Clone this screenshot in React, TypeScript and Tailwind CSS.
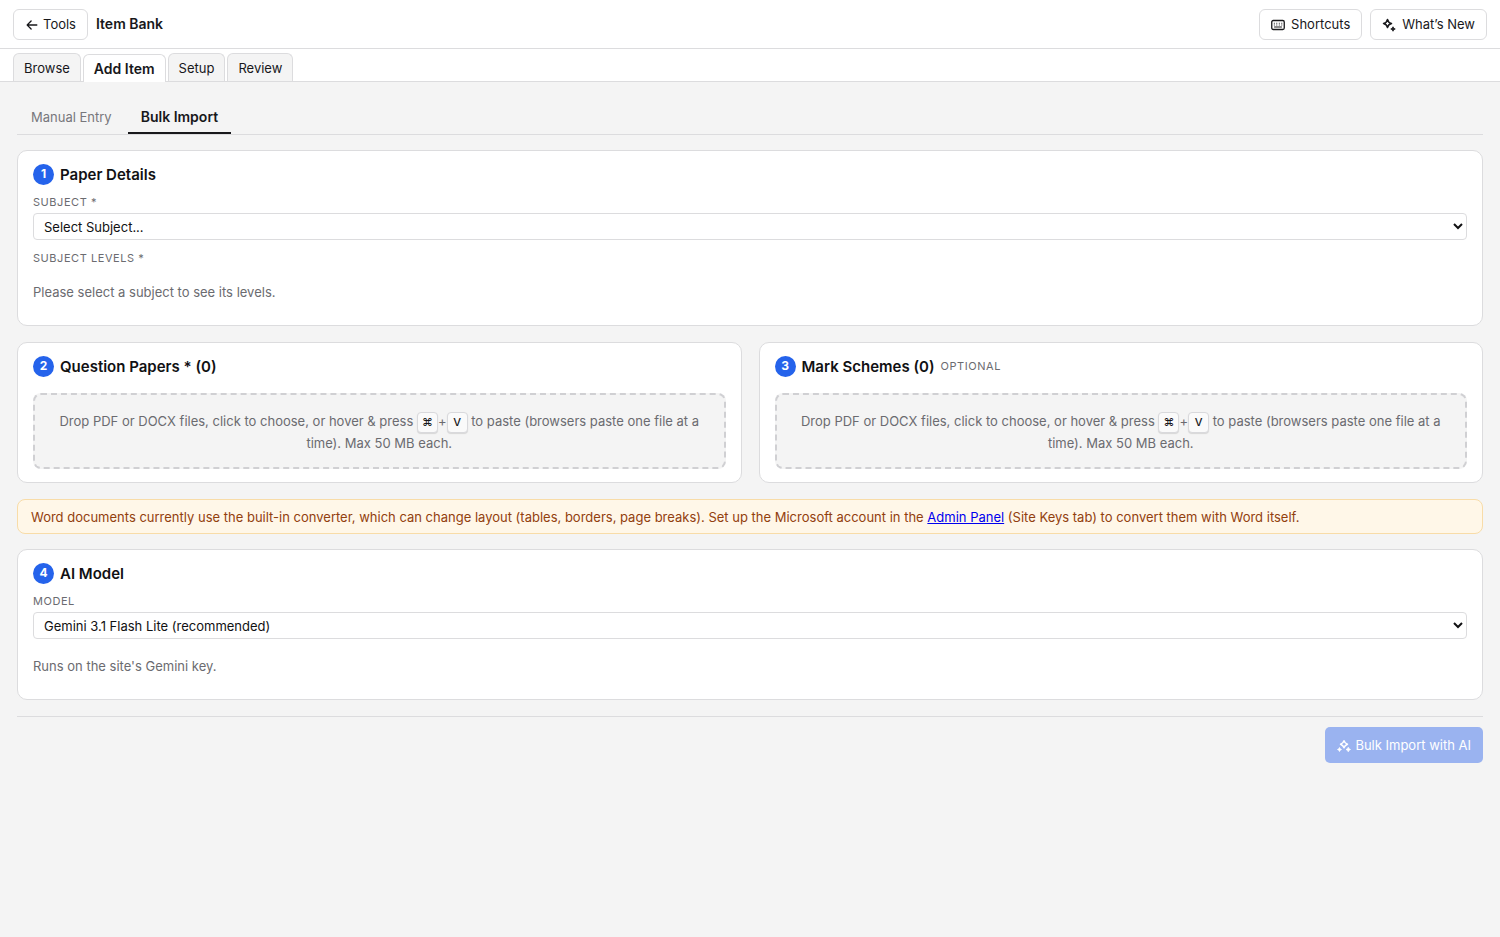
import React, { useState } from 'react';
import { PiArrowLeftBold } from 'react-icons/pi';

interface TabItem {
  id: string;
  label: string;
}

const MAIN_TABS: TabItem[] = [
  { id: 'browse', label: 'Browse' },
  { id: 'add', label: 'Add Item' },
  { id: 'setup', label: 'Setup' },
  { id: 'review', label: 'Review' },
];

const SUB_TABS: TabItem[] = [
  { id: 'manual', label: 'Manual Entry' },
  { id: 'bulk', label: 'Bulk Import' },
];

const FIELD_LABEL = 'block text-[11px] leading-4 tracking-wider uppercase text-[#6b6b70]';
const HINT = 'text-[13px] leading-[22px] text-[#6b6b70]';
const CARD = 'rounded-[10px] border border-[#dcdcde] bg-white px-[15px] pt-[10px]';
const HEADER_BUTTON =
  'flex h-[31px] items-center rounded-md border border-[#dcdcde] bg-white px-[11px] pt-[2px] text-[13px] text-[#18181b]';

const KeyboardIcon: React.FC = () => (
  <svg viewBox="0 0 28 28" className="size-[14px]" fill="none" stroke="currentColor" strokeWidth="2.6" strokeLinecap="round" aria-hidden="true">
    <rect x="1.5" y="5" width="25" height="18" rx="3" />
    <path d="M6.5 10.5h.2M11.5 10.5h.2M16.5 10.5h.2M21.5 10.5h.2M6.5 14h.2M11.5 14h.2M16.5 14h.2M21.5 14h.2" strokeWidth="2" />
    <path d="M7 18h14" strokeWidth="2" />
  </svg>
);

const SparkleIcon: React.FC = () => (
  <svg viewBox="0 0 28 28" className="size-[14px]" fill="none" stroke="currentColor" strokeLinejoin="round" aria-hidden="true">
    <path d="M11 3 Q12.4 9.6 19 11 Q12.4 12.4 11 19 Q9.6 12.4 3 11 Q9.6 9.6 11 3 Z" strokeWidth="3" />
    <path d="M22 17.5 L23.6 20.4 L26.5 22 L23.6 23.6 L22 26.5 L20.4 23.6 L17.5 22 L20.4 20.4 Z" fill="currentColor" strokeWidth="1.5" />
  </svg>
);

const SparklesIcon: React.FC = () => (
  <svg viewBox="0 0 28 28" className="size-[14px]" fill="none" stroke="currentColor" strokeLinejoin="round" aria-hidden="true">
    <path d="M14 3.5 Q15.8 8.7 21 10.5 Q15.8 12.3 14 17.5 Q12.2 12.3 7 10.5 Q12.2 8.7 14 3.5 Z" strokeWidth="3" />
    <path d="M5 17 L6.3 19.7 L9 21 L6.3 22.3 L5 25 L3.7 22.3 L1 21 L3.7 19.7 Z" fill="currentColor" strokeWidth="1.5" />
    <path d="M22.5 16.5 L24 19.5 L27 21 L24 22.5 L22.5 25.5 L21 22.5 L18 21 L21 19.5 Z" fill="currentColor" strokeWidth="1.5" />
  </svg>
);

const StepTitle: React.FC<{ step: number; title: string; note?: string }> = ({ step, title, note }) => (
  <div className="flex h-[26px] items-center">
    <span className="flex size-[21px] shrink-0 items-center justify-center rounded-full bg-[#2563eb] text-xs font-bold text-white">
      {step}
    </span>
    <h2 className="ml-[6px] pt-[2px] text-[15px] leading-[26px] font-semibold text-[#111113]">{title}</h2>
    {note && <span className="ml-[6px] text-[11px] leading-4 tracking-wider text-[#6b6b70] uppercase">{note}</span>}
  </div>
);

const Key: React.FC<{ children: React.ReactNode }> = ({ children }) => (
  <kbd className="-my-1 inline-flex size-[21px] items-center justify-center rounded border border-[#d9d9dc] bg-[#fafafa] align-middle font-['Inter',sans-serif] text-[11px] leading-4 font-medium text-[#18181b] shadow-[0_1px_1px_rgba(0,0,0,0.12)]">
    {children}
  </kbd>
);

const DropCard: React.FC<{ step: number; title: string; note?: string }> = ({ step, title, note }) => (
  <section className={`${CARD} pb-[13px]`}>
    <StepTitle step={step} title={title} note={note} />
    <button
      type="button"
      className="mt-[14px] block w-full rounded-lg border-2 border-dashed border-[#d0d0d3] bg-[#f4f4f4] px-4 pt-[15px] pb-[13px] text-center text-[13px] leading-[22px] text-[#6b6b70]"
    >
      Drop PDF or DOCX files, click to choose, or hover &amp; press <Key>⌘</Key>+<Key>V</Key> to paste (browsers paste
      one file at a time). Max 50 MB each.
    </button>
  </section>
);

const SelectField: React.FC<{ id: string; label: string; options: string[] }> = ({ id, label, options }) => (
  <div className="mt-[7px]">
    <label htmlFor={id} className={FIELD_LABEL}>{label}</label>
    <select
      id={id}
      className="mt-[3px] block h-[27px] w-full rounded border border-[#dcdcde] bg-white px-[6px] text-[13px] text-[#111113]"
    >
      {options.map((option) => (
        <option key={option}>{option}</option>
      ))}
    </select>
  </div>
);

const App: React.FC = () => {
  const [mainTab, setMainTab] = useState('add');
  const [subTab, setSubTab] = useState('bulk');

  return (
    <div className="min-h-screen bg-[#f4f4f4] font-['Inter',sans-serif] text-[13px] text-[#18181b]">
      <header className="flex h-[49px] items-center gap-2 border-b border-[#dcdcde] bg-white px-[13px]">
        <button type="button" className={`${HEADER_BUTTON} gap-1`}>
          <PiArrowLeftBold className="size-[14px]" />
          Tools
        </button>
        <h1 className="text-sm font-semibold">Item Bank</h1>
        <div className="ml-auto flex gap-2">
          <button type="button" className={`${HEADER_BUTTON} gap-[6px]`}>
            <KeyboardIcon />
            Shortcuts
          </button>
          <button type="button" className={`${HEADER_BUTTON} gap-[6px]`}>
            <SparkleIcon />
            What’s New
          </button>
        </div>
      </header>

      <nav className="flex h-[33px] items-end gap-[2px] border-b border-[#dcdcde] bg-white px-[13px]">
        {MAIN_TABS.map((tab) => (
          <button
            key={tab.id}
            type="button"
            onClick={() => setMainTab(tab.id)}
            className={
              tab.id === mainTab
                ? '-mb-px h-7 rounded-t-md border border-b-0 border-[#dcdcde] bg-white px-[10px] text-sm font-semibold'
                : 'h-7 rounded-t-md border border-b-0 border-[#dcdcde] bg-[#f4f4f4] px-[10px] pt-[2px]'
            }
          >
            {tab.label}
          </button>
        ))}
      </nav>

      <main className="px-[17px] pt-[18px]">
        <div className="flex h-[35px] border-b border-[#dcdcde]">
          {SUB_TABS.map((tab) => (
            <button
              key={tab.id}
              type="button"
              onClick={() => setSubTab(tab.id)}
              className={
                tab.id === subTab
                  ? 'ml-[2px] border-b-2 border-[#18181b] px-[13px] pt-[2px] text-sm font-semibold'
                  : 'border-b-2 border-transparent px-[14px] pt-[3px] text-[#77777c]'
              }
            >
              {tab.label}
            </button>
          ))}
        </div>

        <section className={`${CARD} mt-[15px] pb-[22px]`}>
          <StepTitle step={1} title="Paper Details" />
          <SelectField id="subject" label="Subject *" options={['Select Subject...']} />
          <p className={`${FIELD_LABEL} mt-[10px]`}>Subject Levels *</p>
          <p className={`${HINT} mt-[15px]`}>Please select a subject to see its levels.</p>
        </section>

        <div className="mt-4 grid grid-cols-2 gap-[17px]">
          <DropCard step={2} title="Question Papers * (0)" />
          <DropCard step={3} title="Mark Schemes (0)" note="Optional" />
        </div>

        <p className="mt-4 rounded-lg border border-[#f8dca8] bg-[#fff7e8] px-[13px] pt-[7px] pb-[5px] text-[13px] leading-[21px] text-[#92400e]">
          Word documents currently use the built-in converter, which can change layout (tables, borders, page breaks).
          Set up the Microsoft account in the{' '}
          <a href="#admin" className="text-[#0000ee] underline">Admin Panel</a> (Site Keys tab) to convert them with
          Word itself.
        </p>

        <section className={`${CARD} mt-[15px] pb-[22px]`}>
          <StepTitle step={4} title="AI Model" />
          <SelectField id="model" label="Model" options={['Gemini 3.1 Flash Lite (recommended)']} />
          <p className={`${HINT} mt-4`}>Runs on the site's Gemini key.</p>
        </section>

        <div className="mt-4 flex justify-end border-t border-[#dcdcde] pt-[10px]">
          <button
            type="button"
            disabled
            className="flex h-9 items-center gap-1 rounded-[5px] bg-[#9ab3f0] px-3 pt-[2px] text-white"
          >
            <SparklesIcon />
            Bulk Import with AI
          </button>
        </div>
      </main>
    </div>
  );
};

export default App;
